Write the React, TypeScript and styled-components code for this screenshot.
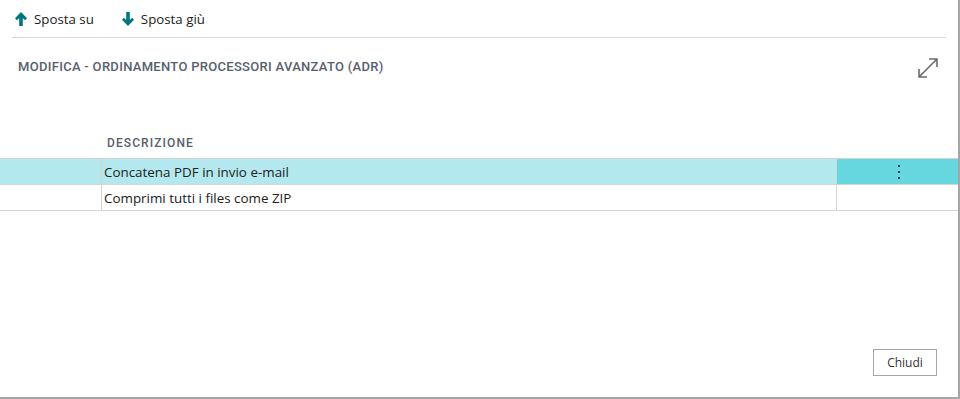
import React from 'react';
import styled, { createGlobalStyle } from 'styled-components';

const GlobalStyle = createGlobalStyle`
  html, body {
    margin: 0;
    padding: 0;
    background: #fff;
  }
  body {
    font-family: 'Open Sans', 'Noto Sans', sans-serif;
  }
`;

const Dialog = styled.div`
  box-sizing: border-box;
  width: 960px;
  height: 399px;
  display: flex;
  flex-direction: column;
  background: #fff;
  border-right: 2px solid #a6a6a6;
  border-bottom: 2px solid #a6a6a6;
`;

const Toolbar = styled.div`
  display: flex;
  align-items: center;
  gap: 28px;
  height: 37px;
  margin: 0 12px 0 12px;
  padding-left: 3px;
  border-bottom: 1px solid #d6d6d6;
`;

const ToolButton = styled.button`
  display: flex;
  align-items: center;
  gap: 7px;
  padding: 0;
  border: none;
  background: none;
  font-family: 'Open Sans', 'Noto Sans', sans-serif;
  font-size: 13.3px;
  color: #212121;
  cursor: pointer;
`;

const TitleRow = styled.div`
  display: flex;
  align-items: center;
  justify-content: space-between;
  padding: 12px 18px 0 18px;
  height: 32px;
`;

const Title = styled.h1`
  margin: 0;
  font-family: Roboto, 'DejaVu Sans', sans-serif;
  font-size: 13px;
  font-weight: 500;
  letter-spacing: 0.3px;
  color: #56606f;
`;

const ExpandIcon = styled.svg`
  width: 24px;
  height: 24px;
  margin-top: 4px;
`;

const Table = styled.div`
  margin-top: 46px;
  display: grid;
  grid-template-columns: 101px 1fr 122px;
`;

const HeadCell = styled.div`
  padding: 0 6px;
  height: 30px;
  display: flex;
  align-items: center;
  font-family: Roboto, 'DejaVu Sans', sans-serif;
  font-size: 12px;
  font-weight: 500;
  letter-spacing: 1.1px;
  color: #56606f;
  border-bottom: 1px solid #d4d4d4;
`;

const Cell = styled.div<{ $bg?: string; $line?: boolean }>`
  box-sizing: border-box;
  height: 26px;
  display: flex;
  align-items: center;
  padding: 0 2px;
  background: ${(p) => p.$bg || 'transparent'};
  border-bottom: 1px solid #d4d4d4;
  border-left: ${(p) => (p.$line ? '1px solid #d4d4d4' : 'none')};
  font-family: 'Open Sans', 'Noto Sans', sans-serif;
  font-size: 13.4px;
  color: #212121;
`;

const MenuCell = styled(Cell)`
  justify-content: center;
  padding-right: 0;
`;

const Footer = styled.div`
  margin-top: auto;
  display: flex;
  justify-content: flex-end;
  padding: 0 21px 21px 0;
`;

const CloseButton = styled.button`
  width: 64px;
  height: 27px;
  border: 1px solid #a6a6a6;
  background: #fff;
  font-family: 'Open Sans', 'Noto Sans', sans-serif;
  font-size: 12px;
  color: #333;
  cursor: pointer;
`;

const rows = ['Concatena PDF in invio e-mail', 'Comprimi tutti i files come ZIP'];

function Arrow({ down }: { down?: boolean }) {
  return (
    <svg width="12" height="14" viewBox="0 0 12 14" style={{ transform: down ? 'rotate(180deg)' : undefined }}>
      <path d="M6 0 L12 6.2 L10 8.2 L7.8 6 L7.8 14 L4.2 14 L4.2 6 L2 8.2 L0 6.2 Z" fill="#00777c" />
    </svg>
  );
}

export default function App() {
  return (
    <>
      <GlobalStyle />
      <Dialog>
        <Toolbar>
          <ToolButton>
            <Arrow />
            Sposta su
          </ToolButton>
          <ToolButton>
            <Arrow down />
            Sposta giù
          </ToolButton>
        </Toolbar>
        <TitleRow>
          <Title>MODIFICA - ORDINAMENTO PROCESSORI AVANZATO (ADR)</Title>
          <ExpandIcon viewBox="0 0 24 24">
            <path d="M3 21 L21 3 M13 3 L21 3 L21 11 M3 13 L3 21 L11 21" stroke="#6b6b6b" strokeWidth="1.6" fill="none" />
          </ExpandIcon>
        </TitleRow>
        <Table>
          <HeadCell />
          <HeadCell>DESCRIZIONE</HeadCell>
          <HeadCell />
          {rows.map((r, i) => (
            <React.Fragment key={r}>
              <Cell $bg={i === 0 ? '#b3e9ee' : undefined} />
              <Cell $bg={i === 0 ? '#b3e9ee' : undefined} $line>
                {r}
              </Cell>
              <MenuCell $bg={i === 0 ? '#66d6df' : undefined} $line>
                {i === 0 && (
                  <svg width="4" height="16" viewBox="0 0 4 16">
                    <rect x="1" y="1" width="2" height="2" fill="#1d3b5a" />
                    <rect x="1" y="7" width="2" height="2" fill="#1d3b5a" />
                    <rect x="1" y="13" width="2" height="2" fill="#1d3b5a" />
                  </svg>
                )}
              </MenuCell>
            </React.Fragment>
          ))}
        </Table>
        <Footer>
          <CloseButton>Chiudi</CloseButton>
        </Footer>
      </Dialog>
    </>
  );
}
